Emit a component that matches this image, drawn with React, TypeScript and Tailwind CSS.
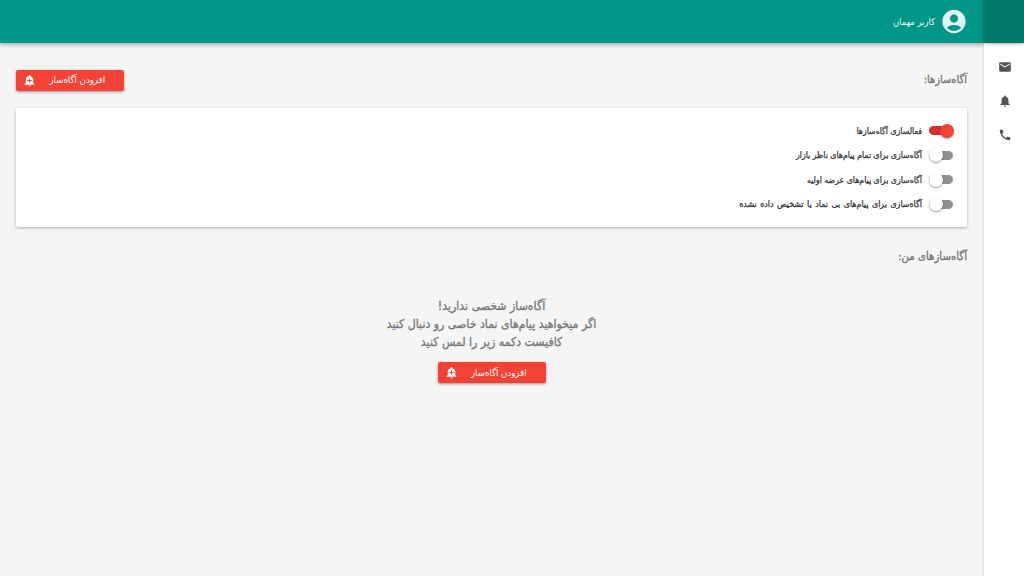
import { MdAccountCircle, MdAddAlert, MdCall, MdEmail, MdNotifications } from "react-icons/md";

function AddButton() {
  return (
    <button className="flex h-[21px] w-[108px] items-center rounded-[2px] bg-[#f44336] pl-[7px] pr-[19px] text-[9.5px] font-normal text-white shadow-[0_1px_3px_rgba(0,0,0,0.4)]" dir="ltr">
      <MdAddAlert className="h-[13px] w-[13px] text-white" />
      <span className="flex-1 whitespace-nowrap text-right" dir="rtl">افزودن آگاه‌ساز</span>
    </button>
  );
}

function Toggle({ on }: { on?: boolean }) {
  return (
    <div className="relative h-[9px] w-[24px] shrink-0 rounded-full" dir="ltr">
      <div className={on ? "h-full w-full rounded-full bg-[#d32f2f]" : "h-full w-full rounded-full bg-[#8f8f8f]"} />
      <div className={on ? "absolute right-[-1px] top-[-2.5px] h-[14px] w-[14px] rounded-full bg-[#f44336] shadow-[0_1px_2px_rgba(0,0,0,0.35)]" : "absolute left-0 top-[-2.5px] h-[14px] w-[14px] rounded-full bg-white shadow-[0_1px_2px_rgba(0,0,0,0.4)]"} />
    </div>
  );
}

function Row({ label, on, wide }: { label: string; on?: boolean; wide?: boolean }) {
  return (
    <div className="flex h-[24.5px] items-center gap-[7px]">
      <Toggle on={on} />
      <span className={wide ? "whitespace-nowrap pt-[1px] text-[8.8px] font-normal text-[#333] [word-spacing:1px] [-webkit-text-stroke:0.25px_#333]" : "whitespace-nowrap pt-[1px] text-[8.7px] font-normal text-[#333] [-webkit-text-stroke:0.25px_#333]"}>{label}</span>
    </div>
  );
}

export default function App() {
  return (
    <div className="flex h-[576px] w-[1024px] overflow-hidden bg-[#f5f5f5] font-['DejaVu_Sans_Condensed','DejaVu_Sans',sans-serif]" dir="rtl">
      <aside className="z-10 flex w-[40px] shrink-0 flex-col items-center bg-white shadow-[0_0_3px_rgba(0,0,0,0.15)]">
        <div className="h-[43px] w-full bg-[#00796b] shadow-[0_1px_3px_rgba(0,0,0,0.3)]" />
        <div className="flex flex-col items-center gap-[20px] pl-[2px] pt-[17px] text-[#555]">
          <MdEmail className="h-[14px] w-[14px]" />
          <MdNotifications className="h-[14px] w-[14px]" />
          <MdCall className="h-[14px] w-[14px]" />
        </div>
      </aside>
      <div className="flex min-w-0 flex-1 flex-col">
        <header className="flex h-[43px] shrink-0 items-center gap-[5px] bg-[#009688] pr-[16px] text-white shadow-[0_2px_4px_rgba(0,0,0,0.3)]">
          <span className="flex h-[28px] w-[28px] items-center justify-center rounded-full"><MdAccountCircle className="h-[33px] w-[33px] text-[#e0f2f1]" /></span>
          <span className="whitespace-nowrap text-[9.3px] text-[#f0faf9]">کاربر مهمان</span>
        </header>
        <main className="flex flex-1 flex-col pl-[16px] pr-[17px]">
          <div className="mt-[27px] flex h-[21px] items-center justify-between">
            <h2 className="-mt-[1px] text-[11px] font-normal text-[#757575] [-webkit-text-stroke:0.3px_#757575]">آگاه‌سازها:</h2>
            <AddButton />
          </div>
          <section className="mt-[17px] flex h-[119px] flex-col justify-center rounded-[2px] bg-white pr-[14px] shadow-[0_1px_3px_rgba(0,0,0,0.3)]">
            <Row on label="فعالسازی آگاه‌سازها" />
            <Row label="آگاه‌سازی برای تمام پیام‌های ناظر بازار" />
            <Row label="آگاه‌سازی برای پیام‌های عرضه اولیه" />
            <Row wide label="آگاه‌سازی برای پیام‌های بی نماد یا تشخیص داده نشده" />
          </section>
          <h2 className="mt-[22px] text-[11.3px] font-normal leading-[16px] text-[#757575] [-webkit-text-stroke:0.3px_#757575]">آگاه‌سازهای من:</h2>
          <div className="mt-[32px] flex flex-col items-center text-[12.2px] font-normal leading-[18px] text-[#757575] [-webkit-text-stroke:0.3px_#757575]">
            <p>آگاه‌ساز شخصی ندارید!</p>
            <p>اگر میخواهید پیام‌های نماد خاصی رو دنبال کنید</p>
            <p>کافیست دکمه زیر را لمس کنید</p>
            <div className="mt-[11px] [-webkit-text-stroke:0]"><AddButton /></div>
          </div>
        </main>
      </div>
    </div>
  );
}
